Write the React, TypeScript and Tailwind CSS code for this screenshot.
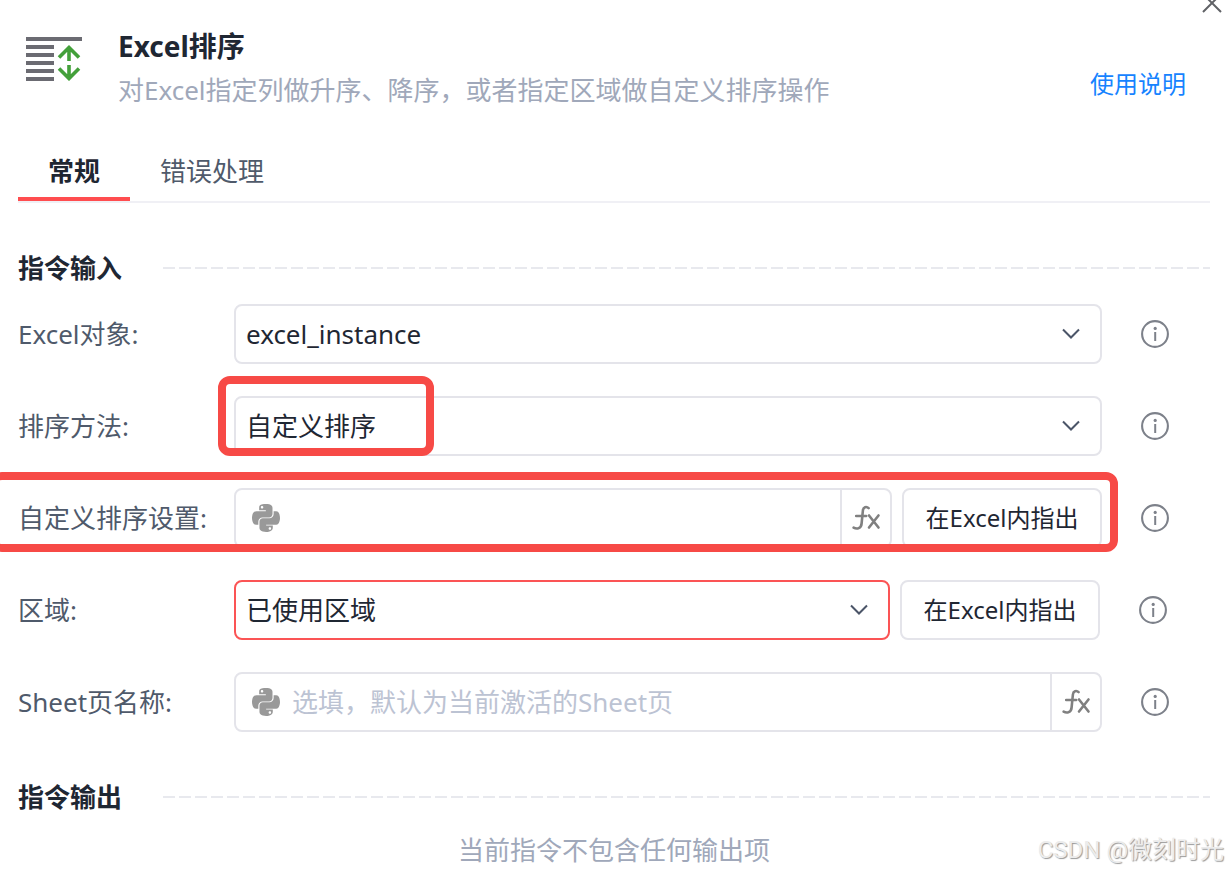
import { useState } from "react";
import type { ReactNode } from "react";
import { FaPython } from "react-icons/fa";

function SortIcon() {
  return (
    <svg className="mt-[37px] h-[44px] w-[56px] shrink-0" viewBox="0 0 56 44" fill="none" aria-hidden="true">
      <path d="M0 2h56M0 10h28M0 18h28M0 26h28M0 34h28M0 42h28" stroke="#6b6b72" strokeWidth="4" />
      <path d="M43 24V11M33 20.5l10-10 10 10M43 28v13M33 31.5l10 10 10-10" stroke="#43a03a" strokeWidth="3.6" />
    </svg>
  );
}

function ChevronIcon() {
  return (
    <svg
      className="pointer-events-none absolute top-1/2 right-[21px] h-5 w-5 -translate-y-1/2"
      viewBox="0 0 20 20"
      fill="none"
      aria-hidden="true"
    >
      <path d="M2 5.5l8 8 8-8" stroke="#4b5568" strokeWidth="2" />
    </svg>
  );
}

function FxIcon() {
  return (
    <svg className="h-[26px] w-[30px]" viewBox="0 0 30 26" fill="none" stroke="#808080" strokeLinecap="round" aria-hidden="true">
      <path d="M17.6 3.2C15.4 1 12.2 2 11.9 5.5L10.6 18.5C10.2 23.4 6 24.6 2.6 22.6M5.2 11h10" strokeWidth="2.6" />
      <path d="M18 10.5l9.5 12M27.5 10.5l-9.5 12" strokeWidth="2.6" />
    </svg>
  );
}

function InfoButton({ label }: { label: string }) {
  return (
    <button type="button" aria-label={label} className="ml-[39px] h-7 w-7 shrink-0">
      <svg className="h-7 w-7" viewBox="0 0 28 28" fill="none" aria-hidden="true">
        <circle cx="14" cy="14" r="12.9" stroke="#7d818a" strokeWidth="2.1" />
        <circle cx="14.2" cy="8.4" r="1.6" fill="#7d818a" />
        <path d="M14.2 12v9" stroke="#7d818a" strokeWidth="2" />
      </svg>
    </button>
  );
}

function SectionTitle({ children }: { children: ReactNode }) {
  return (
    <div className="flex h-9 items-center">
      <h2 className="w-[145px] shrink-0 text-[26px] leading-9 font-bold">{children}</h2>
      <div className="h-[2px] flex-1 bg-[repeating-linear-gradient(90deg,#e8e9ee_0px,#e8e9ee_12px,transparent_12px,transparent_16px)]" />
    </div>
  );
}

interface RowProps {
  id: string;
  label: string;
  mark?: ReactNode;
  spacing?: string;
  children: ReactNode;
}

function Row({ id, label, mark, spacing = "pr-[41px]", children }: RowProps) {
  return (
    <div className={`relative flex h-[60px] items-center ${spacing}`}>
      <label htmlFor={id} className="w-[216px] shrink-0 text-[26px] leading-9 text-[#4f5a6b]">
        {label}
      </label>
      <div className="flex h-full min-w-0 flex-1 gap-[10px]">{children}</div>
      <InfoButton label={`${label}说明`} />
      {mark}
    </div>
  );
}

function SelectBox({ id, options, invalid }: { id: string; options: string[]; invalid?: boolean }) {
  return (
    <div className="relative h-full min-w-0 flex-1">
      <select
        id={id}
        className={`h-full w-full appearance-none rounded-lg border-2 bg-white pr-12 pl-[10px] text-[26px] outline-none ${
          invalid ? "border-[#fb5455]" : "border-[#e4e4ea]"
        }`}
      >
        {options.map((option) => (
          <option key={option}>{option}</option>
        ))}
      </select>
      <ChevronIcon />
    </div>
  );
}

function ExpressionInput({ id, placeholder }: { id: string; placeholder?: string }) {
  const [value, setValue] = useState("");

  return (
    <div className="flex h-full min-w-0 flex-1 items-center overflow-hidden rounded-lg border-2 border-[#e4e4ea] bg-white">
      <FaPython className="ml-[14px] h-8 w-8 shrink-0 text-[#999999]" aria-hidden="true" />
      <input
        id={id}
        type="text"
        value={value}
        onChange={(e) => setValue(e.target.value)}
        placeholder={placeholder}
        className="h-full min-w-0 flex-1 px-[10px] text-[26px] outline-none placeholder:text-[#bcc3d3]"
      />
      <button
        type="button"
        aria-label="表达式"
        className="flex h-full w-[50px] shrink-0 items-center justify-center border-l-2 border-[#e4e4ea]"
      >
        <FxIcon />
      </button>
    </div>
  );
}

function PickButton() {
  return (
    <button type="button" className="h-full w-[200px] shrink-0 rounded-lg border-2 border-[#e4e4ea] bg-white text-[24px]">
      在Excel内指出
    </button>
  );
}

export default function App() {
  const [tab, setTab] = useState("常规");

  return (
    <div className="relative min-h-screen overflow-hidden bg-white px-[18px] font-['Noto_Sans','Noto_Sans_CJK_SC',sans-serif] text-[#1f2733]">
      <button type="button" aria-label="关闭" className="absolute -top-[7px] right-[6px] h-5 w-5">
        <svg className="h-5 w-5" viewBox="0 0 20 20" fill="none" aria-hidden="true">
          <path d="M1 1l18 18M19 1L1 19" stroke="#606266" strokeWidth="2" />
        </svg>
      </button>

      <header className="flex h-[142px] items-start pr-6 pl-2">
        <SortIcon />
        <div className="mt-7 ml-9 flex-1">
          <h1 className="text-[28px] leading-9 font-bold">Excel排序</h1>
          <p className="mt-1 text-[26px] leading-[44px] text-[#a0a8ba]">对Excel指定列做升序、降序，或者指定区域做自定义排序操作</p>
        </div>
        <a href="#help" className="mt-[66px] text-[24px] leading-9 text-[#1683ff]">
          使用说明
        </a>
      </header>

      <div role="tablist" className="flex h-[61px] border-b-2 border-[#f0f0f5] text-[26px]">
        {["常规", "错误处理"].map((name) => (
          <button
            key={name}
            type="button"
            role="tab"
            aria-selected={tab === name}
            onClick={() => setTab(name)}
            className={`border-b-4 px-[30px] pt-1 ${
              tab === name ? "border-[#ff4d4f] font-bold" : "border-transparent text-[#4f5a6b]"
            }`}
          >
            {name}
          </button>
        ))}
      </div>

      <form className="mt-[47px]" onSubmit={(e) => e.preventDefault()}>
        <SectionTitle>指令输入</SectionTitle>
        <div className="mt-[18px] flex flex-col gap-8">
          <Row id="excel" label="Excel对象:">
            <SelectBox id="excel" options={["excel_instance"]} />
          </Row>
          <Row
            id="method"
            label="排序方法:"
            mark={
              <div className="pointer-events-none absolute -top-5 left-[200px] h-20 w-[216px] rounded-xl border-8 border-[#f74a46]" />
            }
          >
            <SelectBox id="method" options={["自定义排序", "升序", "降序"]} />
          </Row>
          <Row
            id="custom"
            label="自定义排序设置:"
            mark={
              <div className="pointer-events-none absolute -top-4 right-[92px] -left-[28px] h-20 rounded-xl border-8 border-[#f74a46]" />
            }
          >
            <ExpressionInput id="custom" />
            <PickButton />
          </Row>
          <Row id="range" label="区域:" spacing="pr-[43px]">
            <SelectBox id="range" options={["已使用区域", "指定区域"]} invalid />
            <PickButton />
          </Row>
          <Row id="sheet" label="Sheet页名称:">
            <ExpressionInput id="sheet" placeholder="选填，默认为当前激活的Sheet页" />
          </Row>
        </div>
      </form>

      <section className="mt-[47px]">
        <SectionTitle>指令输出</SectionTitle>
        <p className="mt-4 text-center text-[26px] leading-[38px] text-[#a0a8ba]">当前指令不包含任何输出项</p>
      </section>

      <div className="absolute right-[4px] bottom-[2px] font-[Roboto,'Noto_Sans_CJK_SC',sans-serif] text-[24px] leading-9 text-[#ececec] [text-shadow:1px_1px_1px_#999999]">
        CSDN @微刻时光
      </div>
    </div>
  );
}
